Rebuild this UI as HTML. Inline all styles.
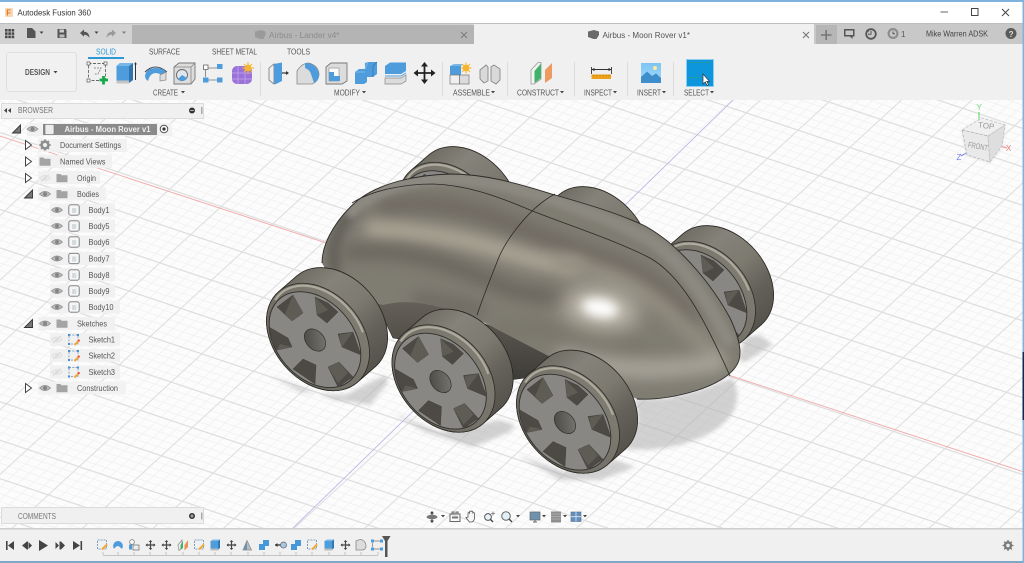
<!DOCTYPE html>
<html><head><meta charset="utf-8"><title>Autodesk Fusion 360</title>
<style>
html,body{margin:0;padding:0;background:#fff;width:1024px;height:563px;overflow:hidden}
svg{display:block;filter:blur(.3px)}
text{font-family:"Liberation Sans",sans-serif;fill:#555;font-size:8px}
</style></head><body>
<svg width="1024" height="563" viewBox="0 0 1024 563" xmlns="http://www.w3.org/2000/svg">
<defs>
<pattern id="grid" width="1" height="1" patternUnits="userSpaceOnUse" patternTransform="matrix(51.7 17.3 -30.7 28.2 893.3 430.7)">
<rect width="1" height="1" fill="#fcfcfc"/>
<g fill="#f1f1f1"><rect x=".2" width=".016" height="1"/><rect x=".4" width=".016" height="1"/><rect x=".6" width=".016" height="1"/><rect x=".8" width=".016" height="1"/><rect y=".2" width="1" height=".022"/><rect y=".4" width="1" height=".022"/><rect y=".6" width="1" height=".022"/><rect y=".8" width="1" height=".022"/></g>
<g fill="#dedede"><rect width=".022" height="1"/><rect width="1" height=".034"/></g>
</pattern>
<filter id="b2" x="-30%" y="-30%" width="160%" height="160%"><feGaussianBlur stdDeviation="2"/></filter>
<filter id="b3" x="-30%" y="-30%" width="160%" height="160%"><feGaussianBlur stdDeviation="3"/></filter>
<filter id="b6" filterUnits="userSpaceOnUse" x="280" y="130" width="500" height="310"><feGaussianBlur stdDeviation="7"/></filter>
<filter id="b5" filterUnits="userSpaceOnUse" x="280" y="130" width="500" height="310"><feGaussianBlur stdDeviation="5"/></filter>
<filter id="b12" filterUnits="userSpaceOnUse" x="280" y="130" width="500" height="310"><feGaussianBlur stdDeviation="11"/></filter>
<linearGradient id="tread" x1="0" y1="0" x2="0" y2="1"><stop offset="0" stop-color="#706d65"/><stop offset=".22" stop-color="#85827a"/><stop offset=".5" stop-color="#7d7a70"/><stop offset=".75" stop-color="#64615a"/><stop offset="1" stop-color="#56534d"/></linearGradient>
<linearGradient id="rim" x1="0" y1="0" x2="1" y2="0"><stop offset="0" stop-color="#6b6861"/><stop offset="1" stop-color="#7f7c72"/></linearGradient>
<linearGradient id="hub" x1="0" y1="0" x2="1" y2="1"><stop offset="0" stop-color="#47453f"/><stop offset="1" stop-color="#7b7a74"/></linearGradient>
<linearGradient id="under" x1="0" y1="0" x2="0" y2="1"><stop offset="0" stop-color="#66625a"/><stop offset="1" stop-color="#3e3c37"/></linearGradient>
<linearGradient id="sky" x1="0" y1="0" x2="0" y2="1"><stop offset="0" stop-color="#7cc4f5"/><stop offset="1" stop-color="#a7dbf9"/></linearGradient>
<clipPath id="bodyClip"><path d="M322,263 C322,240 340,215 358,200 C380,183 415,175 450,174 C490,174 525,186 555,195 C590,205 620,214 645,226 C680,245 712,285 730,318 C738,335 742,350 739,360 C735,373 718,384 695,391 C675,397 655,400 637,399 L560,362 L483,322 L442,308 Q410,298 383,305 L340,295 Z"/></clipPath>
<clipPath id="canvas"><rect x="0" y="100" width="1024" height="428"/></clipPath>

<g id="wheel">
 <g transform="rotate(-41)">
  <path d="M0,-60 L24,-60 A44,60 0 0 1 24,60 L0,60 A44,60 0 0 1 0,-60Z" fill="url(#tread)" stroke="#26251f" stroke-width=".8"/>
  <ellipse rx="44" ry="60" fill="url(#rim)" stroke="#2b2a25" stroke-width=".8"/>
  <path d="M-8,-56 A41,57 0 0 1 37,26" fill="none" stroke="#aeaa9d" stroke-width="2.2"/>
  <ellipse cx="-4" rx="38.5" ry="54" fill="#888783" stroke="#2f2e2a" stroke-width=".9"/>
 </g>
 <g transform="translate(-3,3)">
  <g fill="#4d4a45" stroke="#3a3833" stroke-width=".4">
   <polygon points="-38,-33 -22,-45 -12,-27 -23,-19"/>
   <polygon points="0,-43 13,-37 23,-28 12,-17 2,-25"/>
   <polygon points="23,-6 38,-8 46,15 27,7"/>
   <polygon points="13,27 24,22 38,37 23,47"/>
   <polygon points="-22,29 -12,19 1,25 0,44"/>
   <polygon points="-46,-13 -27,-2 -23,7 -38,10 -43,2"/>
  </g>
  <g fill="#5f5c55">
   <polygon points="0,-43 13,-30 2,-25"/>
   <polygon points="13,27 24,22 33,33 23,43"/>
   <polygon points="27,7 38,-8 24,-5"/>
   <polygon points="-23,7 -38,10 -35,4"/>
   <polygon points="-30,-26 -22,-45 -12,-27 -23,-19"/>
  </g>
  <g transform="rotate(-41)"><ellipse rx="9" ry="12.5" fill="url(#hub)" stroke="#33312d" stroke-width=".7"/></g>
 </g>
</g>

<g id="eye"><path d="M-5.5,0 Q0,-5 5.5,0 Q0,5 -5.5,0Z" fill="#bdbdbd" stroke="#8c8c8c" stroke-width=".8"/><circle r="2" fill="#858585"/></g>
<g id="eyeoff" opacity=".9"><path d="M-5.5,0 Q0,-5 5.5,0 Q0,5 -5.5,0Z" fill="#ececec" stroke="#dcdcdc" stroke-width=".8"/><circle r="1.8" fill="#dedede"/><path d="M-4,3.5 L4,-3.5" stroke="#d8d8d8"/></g>
<g id="folder"><path d="M-5.5,-4 h4 l1,1.2 h6 v7 h-11Z" fill="#a4a4a4"/></g>
<g id="bodyi"><rect x="-5.2" y="-5.2" width="10.4" height="10.4" rx="2" fill="#f6f6f6" stroke="#777" stroke-width=".9"/><rect x="-2" y="-2" width="4.2" height="5" fill="#d4dce2"/></g>
<g id="ski"><rect x="-4.5" y="-4.5" width="9" height="9" fill="none" stroke="#5b90bd" stroke-width=".7" stroke-dasharray="2 1.3"/><g fill="#4a90cf"><rect x="-5.5" y="-5.5" width="2" height="2"/><rect x="3.5" y="-5.5" width="2" height="2"/><rect x="-5.5" y="3.5" width="2" height="2"/></g><path d="M1,5.5 L5.5,1" stroke="#f2a73b" stroke-width="2"/><circle cx="5.3" cy="1" r="1.1" fill="#e8543f"/></g>
<path id="tro" d="M-3,-4.5 L3,0 L-3,4.5Z" fill="#fff" stroke="#444" stroke-width="1"/>
<path id="trd" d="M4,-4 L4,4 L-4,4Z" fill="#777" stroke="#333" stroke-width=".9"/>
<g id="car"><path d="M-2,-1 h4 l-2,2.4Z" fill="#444"/></g>

<g id="tsk"><rect x="-4.5" y="-4.5" width="9" height="9" fill="none" stroke="#5b90bd" stroke-width=".8" stroke-dasharray="2 1"/><path d="M0,5 L5,0" stroke="#f2a73b" stroke-width="2"/></g>
<g id="tmv"><path d="M-4.5,0 H4.5 M0,-4.5 V4.5" stroke="#444" stroke-width="1.2"/><path d="M-5,0 l2,-1.8 v3.6Z M5,0 l-2,-1.8 v3.6Z M0,-5 l-1.8,2 h3.6Z M0,5 l-1.8,-2 h3.6Z" fill="#444"/></g>
<g id="tex"><rect x="-4.5" y="-4" width="7.5" height="9" fill="#4f9ddb"/><path d="M-4.5,-4 L-2,-5.5 H5 L3,-4Z" fill="#7fb9e8"/><path d="M3,-4 L5,-5.5 V3 L3,5Z" fill="#2f78b5"/><rect x="-4.5" y="3.5" width="8" height="2" fill="#bbb"/></g>
<g id="tcb"><path d="M-5,-1 L-1,-1 V-5 H5 V1 H1 V5 H-5Z" fill="#4898d9"/></g>
</defs>

<!-- window chrome -->
<rect width="1024" height="563" fill="#fff"/>
<rect width="1024" height="2" fill="#7fb3de"/>
<rect x="5" y="8" width="8" height="9" rx="1" fill="#f7d9b8"/>
<text x="6.3" y="15.6" font-size="10" font-weight="bold" style="fill:#e8741c">F</text>
<text x="17.5" y="15.5" font-size="8.8" textLength="73.5" lengthAdjust="spacingAndGlyphs" style="fill:#333">Autodesk Fusion 360</text>
<path d="M940.5,12 H948" stroke="#666" stroke-width="1"/>
<rect x="971.5" y="8.5" width="6.5" height="7" fill="none" stroke="#444" stroke-width="1"/>
<path d="M1002,9 L1009,16 M1009,9 L1002,16" stroke="#444" stroke-width="1"/>

<!-- tab row -->
<rect y="23" width="1024" height="21" fill="#d2d2d2"/>
<rect y="23" width="1024" height="1" fill="#bdbdbd"/>
<rect x="132" y="25" width="342" height="19" fill="#b4b4b4"/>
<rect x="474" y="24" width="340" height="20" fill="#f0f0f0"/>
<rect x="814" y="24" width="210" height="20" fill="#c8c8c8"/>
<rect x="816" y="25" width="21" height="19" fill="#b6b6b6"/>

<g fill="#4a4a4a"><rect x="5" y="29" width="2.6" height="2.6"/><rect x="8.3" y="29" width="2.6" height="2.6"/><rect x="11.6" y="29" width="2.6" height="2.6"/><rect x="5" y="32.3" width="2.6" height="2.6"/><rect x="8.3" y="32.3" width="2.6" height="2.6"/><rect x="11.6" y="32.3" width="2.6" height="2.6"/><rect x="5" y="35.6" width="2.6" height="2.6"/><rect x="8.3" y="35.6" width="2.6" height="2.6"/><rect x="11.6" y="35.6" width="2.6" height="2.6"/></g>
<path d="M27,28 h5 l3.5,3.5 v6.5 h-8.5Z" fill="#555"/>
<use href="#car" x="41.5" y="32.5"/>
<path d="M57.5,29 h8 l1,1 v8 h-9Z" fill="#555"/><rect x="59.5" y="29.5" width="4.5" height="3" fill="#ccc"/><rect x="59.5" y="34.5" width="5" height="3" fill="#bbb"/>
<path d="M80,33 l4,-3.5 v2.2 q5,0 5.5,6 q-2,-3 -5.5,-3 v2Z" fill="#555"/>
<use href="#car" x="96.5" y="32.5"/>
<path d="M116,33 l-4,-3.5 v2.2 q-5,0 -5.5,6 q2,-3 5.5,-3 v2Z" fill="#9b9b9b"/>
<use href="#car" x="124" y="32.5" opacity=".6"/>

<path d="M255,31.5 l6,-1.5 l4.5,1.5 v3 l-2,4.5 h-3.5 l-5,-2Z" fill="#9a9a9a"/>
<text x="269" y="38" font-size="8.6" textLength="70.5" lengthAdjust="spacingAndGlyphs" style="fill:#8b8b8b">Airbus - Lander v4*</text>
<path d="M461,32 L467,38 M467,32 L461,38" stroke="#7d7d7d" stroke-width="1.1"/>
<path d="M588,31.5 l6,-1.5 l5,1.5 v3.5 l-2.5,4 h-3 l-5.500,-2Z" fill="#6a6a6a"/>
<text x="602.5" y="38" font-size="8.6" textLength="87.5" lengthAdjust="spacingAndGlyphs" style="fill:#555">Airbus - Moon Rover v1*</text>
<path d="M803,32 L809,38 M809,32 L803,38" stroke="#777" stroke-width="1.1"/>
<path d="M821,35 H831.5 M826.2,30 V40" stroke="#757575" stroke-width="1.6"/>
<path d="M844,29 h10.5 v7.5 h-2 v2.5 l-2.5,-2.5 h-6Z" fill="#555"/><rect x="845.5" y="30.5" width="7.5" height="4.5" fill="#c8c8c8"/>
<circle cx="871" cy="34" r="4.8" fill="none" stroke="#555" stroke-width="1.8"/><path d="M871,31 v3.3 h-3" stroke="#555" fill="none"/><path d="M866,30 l3,-.5 -.5,3Z" fill="#555"/>
<circle cx="893" cy="33.5" r="5.5" fill="#8d8d8d"/><circle cx="893" cy="33.5" r="3.3" fill="#c8c8c8"/><path d="M893,31.5 v2.2 h2" stroke="#555" fill="none"/>
<text x="901" y="37" font-size="8" style="fill:#555">1</text>
<text x="926" y="36.5" font-size="8" textLength="62" lengthAdjust="spacingAndGlyphs" style="fill:#444">Mike Warren ADSK</text>
<circle cx="1011" cy="33.5" r="5.5" fill="#5b5b5b"/><text x="1008.6" y="36.8" font-size="8.5" font-weight="bold" style="fill:#ddd">?</text>

<!-- canvas -->
<rect x="0" y="100" width="1024" height="428" fill="url(#grid)"/>
<g clip-path="url(#canvas)">
<path d="M0,136 L1024,472" stroke="#f2a9a9" stroke-width=".9"/>
<path d="M733,100 L293,528" stroke="#b9b9ea" stroke-width=".9"/>
<!-- ground shadows -->
<g fill="#b5b5b5" opacity=".6" filter="url(#b2)">
 <path d="M269,375 L300,392 L345,395 L385,375 L388,383 L370,405 L335,400 Z"/>
 <path d="M393,413 L440,432 L500,420 L515,425 L510,432 L473,447 L425,432Z"/>
 <path d="M518,455 L565,472 L615,460 L635,467 L600,480 L560,480Z"/>
 <path d="M745,337 L760,335 L773,345 L745,362 L738,360Z"/>
 <path d="M635,399 L667,398 L700,390 L732,378 C742,395 738,415 715,430 C690,445 660,452 625,449 L638,420Z"/>
</g>
<!-- back wheels -->
<use href="#wheel" x="704" y="295"/>
<use href="#wheel" x="450" y="216"/>
<use href="#wheel" x="580" y="256"/>
<!-- underbody -->
<path d="M375,300 Q410,295 442,308 L560,352 L570,372 L510,380 L440,345 L393,338Z" fill="url(#under)" stroke="#2d2b27" stroke-width=".6"/>
<!-- body -->
<g clip-path="url(#bodyClip)">
 <rect x="300" y="160" width="460" height="260" fill="#7f7c72"/>
 <g fill="none" stroke-linecap="round">
  <path d="M385,207 Q445,198 500,220 T610,262 T690,320" stroke="#6f6b62" stroke-width="18" filter="url(#b6)"/>
  <path d="M372,229 Q440,232 500,250 T575,266" stroke="#aea797" stroke-width="16" filter="url(#b6)"/>
  <path d="M560,262 Q625,272 672,315 T716,360" stroke="#938e81" stroke-width="15" filter="url(#b6)"/>
  <path d="M350,252 Q405,250 445,264 T505,287 T590,300" stroke="#6a665d" stroke-width="15" filter="url(#b6)"/>
  <path d="M420,300 Q455,306 476,310" stroke="#6f6c63" stroke-width="18" filter="url(#b6)"/>
  <path d="M500,330 Q580,326 640,345" stroke="#787469" stroke-width="12" filter="url(#b6)"/>
  <path d="M565,358 Q640,378 716,362" stroke="#a5a197" stroke-width="20" filter="url(#b6)"/>
  <path d="M335,270 Q328,235 356,207" stroke="#625f58" stroke-width="12" filter="url(#b5)"/>
  <path d="M352,212 C372,188 415,178 450,178 C490,180 525,190 555,200 C590,212 625,225 650,240 C680,260 705,295 728,340" stroke="#8c8981" stroke-width="13" filter="url(#b3)"/>
 </g>
 <ellipse cx="600" cy="308" rx="38" ry="20" transform="rotate(10 600 308)" fill="#c5bfb2" filter="url(#b12)"/>
 <ellipse cx="600" cy="308" rx="18" ry="9" transform="rotate(10 600 308)" fill="#fff" filter="url(#b5)"/>
</g>
<g fill="none" stroke="#2b2a26" stroke-width=".9">
 <path d="M322,263 C322,240 340,215 358,200 C380,183 415,175 450,174 C490,174 525,186 555,195 C590,205 620,214 645,226 C680,245 712,285 730,318 C738,335 742,350 739,360 C735,373 718,384 695,391 C675,397 655,400 637,399"/>
 <path d="M352,203 C372,190 405,184 433,184 C465,185 495,195 530,210 C570,226 615,240 650,258 C680,275 703,315 730,376" stroke-width=".8"/>
 <path d="M555,194 C530,207 505,240 497,262 C490,280 483,297 477,315" stroke-width=".8"/>
</g>
<!-- front wheels -->
<use href="#wheel" x="318" y="337"/>
<use href="#wheel" x="443.5" y="378.5"/>
<use href="#wheel" x="568" y="419.5"/>

<!-- view cube -->
<path d="M979,112 V122" stroke="#7fe08d" stroke-width="1.5"/>
<path d="M1000,146 L1007,148" stroke="#ef9a9a" stroke-width="1.2"/>
<path d="M968,152 L961,156" stroke="#7f8fe8" stroke-width="1.2"/>
<path d="M982,118 L1005,125 L1002,146 L990,162 L967,155 L962,130Z" fill="#e6e6e6" opacity=".95" filter="url(#b2)"/>
<path d="M962,130 L982,118 L1005,125 L988,136Z" fill="#f0f0f0" stroke="#c4c4c4" stroke-width=".8" stroke-dasharray="3 1.5"/>
<path d="M962,130 L988,136 L990,162 L967,155Z" fill="#e9e9e9" stroke="#b4b4b4" stroke-width=".8" stroke-dasharray="3 1.5"/>
<path d="M988,136 L1005,125 L1002,146 L990,162Z" fill="#dedede" stroke="#bebebe" stroke-width=".8" stroke-dasharray="3 1.5"/>
<text x="978" y="128" font-size="5" style="fill:#999" transform="rotate(8 983 126)">TOP</text>
<text x="968" y="149" font-size="6.2" textLength="20" lengthAdjust="spacingAndGlyphs" style="fill:#999" transform="rotate(10 978 146)">FRONT</text>
<text x="976.5" y="110" font-size="7.5" style="fill:#6fdc7e">Y</text>
<text x="1006" y="151" font-size="7.5" style="fill:#ea7a7a">X</text>
<text x="956.5" y="160" font-size="7.5" style="fill:#6e7ee0">Z</text>

<!-- nav bar -->
<g transform="translate(432,517)"><path d="M-5,0 H5 M0,-5 V5" stroke="#4e4e4e" stroke-width="1.2"/><ellipse rx="5.5" ry="2.2" fill="#777"/><path d="M0,-6 l-2,2.5 h4Z M0,6 l-2,-2.5 h4Z" fill="#333"/></g>
<use href="#car" x="443" y="516"/>
<g fill="none" stroke="#666" stroke-width="1"><rect x="450" y="514" width="10" height="7.5"/><path d="M452,514 v-2 h2 v2 M456,514 v-2 h2 v2"/></g><rect x="452" y="516.5" width="6" height="2" fill="#777"/>
<path d="M468,517 v-4 q1,-1 1.6,0 v-1.5 q1,-1 1.6,0 q.8,-1 1.6,0 v1.5 q1,-1 1.6,0 v6 q-1,3 -3,3 h-2 l-3.5,-4.5Z" fill="#f6f6f6" stroke="#555" stroke-width=".8"/>
<circle cx="488" cy="517" r="3.4" fill="#e8f1f6" stroke="#555" stroke-width="1"/><path d="M490.5,519.5 L493,522" stroke="#444" stroke-width="1.4"/><path d="M491,513.5 h4 M493,511.5 v4" stroke="#777" stroke-width=".8"/>
<circle cx="506" cy="516" r="4.3" fill="#e3eff6" stroke="#666" stroke-width="1"/><path d="M509,519 L512,522" stroke="#444" stroke-width="1.4"/>
<use href="#car" x="518" y="516"/>
<rect x="530" y="512" width="10" height="8" fill="#6f93ae" stroke="#666" stroke-width=".7"/><path d="M533,522 h4 M535,520 v2" stroke="#666"/>
<use href="#car" x="544" y="516"/>
<rect x="551" y="511.5" width="10" height="11" fill="#8e8e8e"/><path d="M551,514 h10 M551,516.5 h10 M551,519 h10" stroke="#c8c8c8" stroke-width=".6"/>
<use href="#car" x="565" y="516"/>
<rect x="571" y="512" width="10" height="9.5" fill="#5f90c1" stroke="#5a6f82" stroke-width=".6"/><path d="M576,512 v9.5 M571,516.7 h10" stroke="#e7e7e7" stroke-width=".8"/>
<use href="#car" x="585" y="516"/>
</g>

<!-- ribbon -->
<rect y="44" width="1024" height="56" fill="#f0f0f0"/>
<rect x="6.5" y="52.5" width="70" height="39" rx="2.5" fill="#f1f1f1" stroke="#dfdfdf"/>
<text x="25" y="75" font-size="7.4" font-weight="bold" textLength="25" lengthAdjust="spacingAndGlyphs" style="fill:#555">DESIGN</text>
<use href="#car" x="55.5" y="72"/>
<text x="96" y="54.5" font-size="7.4" textLength="20" lengthAdjust="spacingAndGlyphs" style="fill:#2c98d8">SOLID</text>
<rect x="88" y="57" width="36" height="2" fill="#2c98d8"/>
<text x="149" y="54.5" font-size="7.4" textLength="31" lengthAdjust="spacingAndGlyphs">SURFACE</text>
<text x="212" y="54.5" font-size="7.4" textLength="45" lengthAdjust="spacingAndGlyphs">SHEET METAL</text>
<text x="287" y="54.5" font-size="7.4" textLength="23" lengthAdjust="spacingAndGlyphs">TOOLS</text>

<g fill="none" stroke="#dcdcdc" stroke-width="1"><path d="M260.5,62 V96 M442.5,62 V96 M507.5,62 V96 M574.5,62 V96 M627.5,62 V96 M673.5,62 V96"/></g>

<text x="153" y="95.5" font-size="7.4" textLength="25" lengthAdjust="spacingAndGlyphs">CREATE</text><use href="#car" x="183" y="92"/>
<text x="334" y="95.5" font-size="7.4" textLength="26" lengthAdjust="spacingAndGlyphs">MODIFY</text><use href="#car" x="364" y="92"/>
<text x="453" y="95.5" font-size="7.4" textLength="37" lengthAdjust="spacingAndGlyphs">ASSEMBLE</text><use href="#car" x="493" y="92"/>
<text x="517" y="95.5" font-size="7.4" textLength="42" lengthAdjust="spacingAndGlyphs">CONSTRUCT</text><use href="#car" x="562" y="92"/>
<text x="584" y="95.5" font-size="7.4" textLength="28" lengthAdjust="spacingAndGlyphs">INSPECT</text><use href="#car" x="615" y="92"/>
<text x="637" y="95.5" font-size="7.4" textLength="24" lengthAdjust="spacingAndGlyphs">INSERT</text><use href="#car" x="664" y="92"/>
<text x="684" y="95.5" font-size="7.4" textLength="25" lengthAdjust="spacingAndGlyphs">SELECT</text><use href="#car" x="712" y="92"/>

<!-- create sketch -->
<rect x="88.5" y="63.5" width="17" height="17" fill="none" stroke="#666" stroke-width=".9" stroke-dasharray="3 1.5"/>
<g fill="#fff" stroke="#555" stroke-width=".7"><rect x="87" y="62" width="3" height="3"/><rect x="104" y="62" width="3" height="3"/><rect x="87" y="79" width="3" height="3"/></g>
<path d="M94,68 h7 l-3,6 h-4" fill="none" stroke="#777" stroke-width=".8" stroke-dasharray="2 1"/>
<path d="M103.5,76 V84.5 M99.5,80 H108" stroke="#17a84a" stroke-width="2.8"/>
<!-- extrude -->
<path d="M116.5,66 L120,63 H133 V80 L129,83 H116.5Z" fill="#4e9cdc"/><path d="M129,66 L133,63 V80 L129,83Z" fill="#2f74ae"/><path d="M116.5,66 L120,63 H133 L129,66Z" fill="#79b6e8"/><rect x="116.5" y="80.5" width="12.5" height="3" fill="#c5c5c5"/>
<path d="M135.5,63 V80" stroke="#333" stroke-width="1"/><path d="M135.5,62 l-1.4,2.4 h2.8Z" fill="#333"/>
<!-- revolve -->
<path d="M145,72 Q155,62 167,72" fill="none" stroke="#444" stroke-width=".9"/>
<path d="M145,76 Q146,68 156,68 Q165,68 166,73 L165,78 Q163,74 156,73 Q150,73 148,81 Q145,79 145,76Z" fill="#4e9cdc"/>
<path d="M160,75 L166,72 V80 L160,81Z" fill="#ddd" stroke="#888" stroke-width=".7"/>
<!-- hole -->
<path d="M174,67 L179,63 H195 V79 L191,84 H174Z" fill="#dcdcdc" stroke="#777" stroke-width=".9"/><path d="M174,67 H191 V84 M191,67 L195,63" fill="none" stroke="#888" stroke-width=".8"/>
<circle cx="182" cy="75" r="5.5" fill="#dfe6ec" stroke="#666" stroke-width=".9"/><path d="M182,75 L187,78 A5.5,5.5 0 0 1 178,79Z" fill="#4e9cdc"/>
<!-- pattern -->
<path d="M208,68 H217 M208,80 H217 M205.5,70 V77" stroke="#777" stroke-width=".8"/>
<rect x="203.5" y="65" width="4.5" height="4.5" fill="#fff" stroke="#666" stroke-width=".8"/>
<g fill="#4e9cdc"><rect x="217" y="64" width="5.5" height="5"/><rect x="203" y="77.5" width="5.5" height="5"/><rect x="217" y="77.5" width="5.5" height="5"/></g>
<!-- form -->
<rect x="232" y="66" width="20" height="18" rx="5" fill="#9a72d8"/><path d="M238,66 V84 M245,66 V84 M232,73 H252 M232,79 H252" stroke="#c2a6ec" stroke-width=".8"/>
<circle cx="248" cy="68" r="3.4" fill="#f5b62c"/><path d="M248,62 V74 M242,68 H254 M244,64 L252,72 M252,64 L244,72" stroke="#f5b62c" stroke-width="1"/>

<!-- press pull -->
<path d="M269,68 L274,64 V84 L269,80Z" fill="#eee" stroke="#777" stroke-width=".8"/><path d="M274,64 L282,62.5 V81 L276,84 H274Z" fill="#4e9cdc"/><path d="M282,73 H288" stroke="#333" stroke-width="1.2"/><path d="M289,73 l-3,-2 v4Z" fill="#333"/>
<!-- fillet -->
<path d="M297,84 V71 Q302,63 309,63 Q319,66 319,75 Q318,82 312,84Z" fill="#dcdcdc" stroke="#888" stroke-width=".8"/>
<path d="M305,63 Q317,63 319,75 Q319,80 314,83 L311,74 Q310,70 305,68Z" fill="#4e9cdc"/>
<!-- shell -->
<path d="M326,67 L331,63 H347 V81 L342,84 H326Z" fill="#dcdcdc" stroke="#777" stroke-width=".9"/><rect x="329" y="68" width="10" height="13" fill="#fafafa" stroke="#888" stroke-width=".6"/><path d="M329,72 H334 V76 H340 V81 H329Z" fill="#4e9cdc"/>
<!-- combine -->
<path d="M355,72 L359,69 H365 V63 L368,62 H377 V74 L373,77 H367 V82 L364,84 H355Z" fill="#4e9cdc"/><path d="M365,69 L368,62" stroke="#7fb9e8"/><path d="M355,72 H365" stroke="#7fb9e8"/><path d="M373,77 V66 M373,66 L377,62" stroke="#2f74ae" stroke-width=".8"/>
<!-- split -->
<path d="M385,66 L390,62.5 H406 V71 L401,74 H385Z" fill="#4e9cdc"/>
<path d="M385,76 H401 L406,73" fill="none" stroke="#4e9cdc" stroke-width="1"/>
<path d="M385,78 H401 L406,75 V81 L401,84 H385Z" fill="#dcdcdc" stroke="#888" stroke-width=".7"/>
<!-- move -->
<g stroke="#222" stroke-width="1.8"><path d="M415,73 H434 M424.5,63 V83"/></g><path d="M413.5,73 l4.5,-3.5 v7Z M435.5,73 l-4.5,-3.5 v7Z M424.5,62 l-3.5,4.5 h7Z M424.5,84 l-3.5,-4.5 h7Z" fill="#222"/>

<!-- assemble -->
<rect x="450" y="66" width="11" height="9" fill="#4e9cdc"/><path d="M450,66 L454,64 H463 L461,66Z" fill="#79b6e8"/><rect x="450" y="75" width="9.5" height="9" fill="#efefef" stroke="#777" stroke-width=".7"/><rect x="459.5" y="75" width="9.5" height="9" fill="#dcdcdc" stroke="#777" stroke-width=".7"/>
<circle cx="466" cy="68" r="3.4" fill="#f5b62c"/><path d="M466,62.5 V73.5 M460.5,68 H471.5 M462,64 L470,72 M470,64 L462,72" stroke="#f5b62c" stroke-width="1"/>
<path d="M480,70 L486,65 L488,67 V81 L484,83 L480,79Z" fill="#d9d9d9" stroke="#888" stroke-width=".9"/>
<path d="M500,69 L494,65 L491,67 V81 L496,84 L500,80Z" fill="#d9d9d9" stroke="#888" stroke-width=".9"/>

<!-- construct -->
<path d="M531,70 L538,62.5 L541,62.5 V79 L534,84 H531Z" fill="#f3f3f3" stroke="#999" stroke-width=".8"/>
<path d="M534.5,71 L541,63.5 V78 L534.5,83Z" fill="#3fb36a"/>
<path d="M545,70 L552,63 V78 L545,83Z" fill="#ed9a61"/>

<!-- inspect -->
<path d="M592,69.5 H611" stroke="#333" stroke-width=".9"/><path d="M591.5,67 V74 M611.5,67 V74" stroke="#333" stroke-width=".9"/>
<path d="M591.5,69.5 l3,-1.6 v3.2Z M611.5,69.5 l-3,-1.6 v3.2Z" fill="#333"/>
<rect x="591.5" y="74.5" width="19.5" height="4.5" fill="#eea21b"/><path d="M594,74.5 v2 M597,74.5 v2 M600,74.5 v2 M603,74.5 v2 M606,74.5 v2 M609,74.5 v2" stroke="#a86b00" stroke-width=".5"/>

<!-- insert -->
<rect x="641" y="63" width="20" height="20" fill="url(#sky)"/><circle cx="655" cy="68" r="2" fill="#ffe89c"/>
<path d="M641,77 L647,71.5 L652,76 L656,73.5 L661,78 V83 H641Z" fill="#3d8ecb"/>

<!-- select -->
<rect x="686.5" y="59.5" width="27" height="27" fill="#0e96dd" stroke="#8fcbee" stroke-width="1"/>
<path d="M689,62.5 H711 M689,77.5 H702" stroke="#3aa36b" stroke-width=".7" stroke-dasharray="2 1.2"/>
<path d="M703,74 V84 L705.3,82 L707,85.5 L708.5,84.7 L706.8,81.4 H709.5Z" fill="#fff" stroke="#333" stroke-width=".7"/>

<!-- browser panel -->
<rect x="1.5" y="103.5" width="202" height="15" fill="#f0f0f0" stroke="#dcdcdc"/>
<path d="M7,108 l-3,2.5 3,2.5Z M11,108 l-3,2.5 3,2.5Z" fill="#444"/>
<text x="18" y="113.2" font-size="7.4" textLength="35" lengthAdjust="spacingAndGlyphs" style="fill:#777">BROWSER</text>
<circle cx="192" cy="110.5" r="3" fill="#333"/><path d="M190.3,110.5 h3.4" stroke="#ddd" stroke-width=".8"/><rect x="201" y="107" width="1.5" height="7" fill="#aaa"/>

<g fill="#f1f1f1" opacity=".92">
<rect x="38" y="139" width="89" height="13"/><rect x="38" y="155" width="74" height="13"/><rect x="38" y="171" width="62" height="13"/><rect x="38" y="187.5" width="68" height="13"/>
<rect x="50" y="203.5" width="65" height="13"/><rect x="50" y="219.5" width="65" height="13"/><rect x="50" y="235.5" width="65" height="13"/><rect x="50" y="252" width="65" height="13"/><rect x="50" y="268" width="65" height="13"/><rect x="50" y="284.5" width="65" height="13"/><rect x="50" y="300.5" width="70" height="13"/>
<rect x="38" y="317" width="77" height="13"/><rect x="50" y="333" width="70" height="13"/><rect x="50" y="349" width="70" height="13"/><rect x="50" y="365.5" width="70" height="13"/><rect x="38" y="381.5" width="88" height="13"/>
<rect x="27" y="123" width="145" height="13"/>
</g>

<use href="#trd" x="16.5" y="129"/>
<use href="#eye" x="32.5" y="129"/>
<rect x="43" y="124" width="114" height="11" fill="#8a8a8a"/><rect x="45" y="124.5" width="9" height="10" rx="1" fill="#ececec" stroke="#777" stroke-width=".6"/>
<text x="64.5" y="132" font-size="7.6" font-weight="bold" textLength="86" lengthAdjust="spacingAndGlyphs" style="fill:#f0f0f0">Airbus - Moon Rover v1</text>
<circle cx="164" cy="129" r="3.8" fill="#fafafa" stroke="#444" stroke-width=".9"/><circle cx="164" cy="129" r="1.6" fill="#333"/>

<use href="#tro" x="28.5" y="145"/>
<g transform="translate(45,145)"><circle r="3.6" fill="none" stroke="#8c8c8c" stroke-width="2.2"/><path d="M0,-5.8 V5.8 M-5.8,0 H5.8 M-4,-4 L4,4 M4,-4 L-4,4" stroke="#8c8c8c" stroke-width="1.4"/><circle r="2" fill="#f1f1f1"/></g>
<text x="60" y="148" font-size="7.6" textLength="61" lengthAdjust="spacingAndGlyphs">Document Settings</text>

<use href="#tro" x="28.5" y="161.5"/><use href="#folder" x="45" y="161.5"/>
<text x="60" y="164.5" font-size="7.6" textLength="45.5" lengthAdjust="spacingAndGlyphs">Named Views</text>

<use href="#tro" x="28.5" y="178"/><use href="#eyeoff" x="45" y="178"/><use href="#folder" x="62" y="178"/>
<text x="77" y="181" font-size="7.6" textLength="19" lengthAdjust="spacingAndGlyphs">Origin</text>

<use href="#trd" x="28.5" y="194"/><use href="#eye" x="45" y="194"/><use href="#folder" x="62" y="194"/>
<text x="77" y="197" font-size="7.6" textLength="22" lengthAdjust="spacingAndGlyphs">Bodies</text>

<use href="#eye" x="57" y="210"/><use href="#bodyi" x="74" y="210"/><text x="88.5" y="213" font-size="7.6" textLength="21" lengthAdjust="spacingAndGlyphs">Body1</text>
<use href="#eye" x="57" y="226"/><use href="#bodyi" x="74" y="226"/><text x="88.5" y="229" font-size="7.6" textLength="21" lengthAdjust="spacingAndGlyphs">Body5</text>
<use href="#eye" x="57" y="242"/><use href="#bodyi" x="74" y="242"/><text x="88.5" y="245" font-size="7.6" textLength="21" lengthAdjust="spacingAndGlyphs">Body6</text>
<use href="#eye" x="57" y="258.5"/><use href="#bodyi" x="74" y="258.5"/><text x="88.5" y="261.5" font-size="7.6" textLength="21" lengthAdjust="spacingAndGlyphs">Body7</text>
<use href="#eye" x="57" y="275"/><use href="#bodyi" x="74" y="275"/><text x="88.5" y="278" font-size="7.6" textLength="21" lengthAdjust="spacingAndGlyphs">Body8</text>
<use href="#eye" x="57" y="291"/><use href="#bodyi" x="74" y="291"/><text x="88.5" y="294" font-size="7.6" textLength="21" lengthAdjust="spacingAndGlyphs">Body9</text>
<use href="#eye" x="57" y="307"/><use href="#bodyi" x="74" y="307"/><text x="88.5" y="310" font-size="7.6" textLength="25" lengthAdjust="spacingAndGlyphs">Body10</text>

<use href="#trd" x="28.5" y="323.5"/><use href="#eye" x="45" y="323.5"/><use href="#folder" x="62" y="323.5"/>
<text x="77" y="326.5" font-size="7.6" textLength="30" lengthAdjust="spacingAndGlyphs">Sketches</text>

<use href="#eyeoff" x="57" y="339.5"/><use href="#ski" x="73.5" y="339.5"/><text x="88.5" y="342.5" font-size="7.6" textLength="26.5" lengthAdjust="spacingAndGlyphs">Sketch1</text>
<use href="#eyeoff" x="57" y="355.5"/><use href="#ski" x="73.5" y="355.5"/><text x="88.5" y="358.5" font-size="7.6" textLength="26.5" lengthAdjust="spacingAndGlyphs">Sketch2</text>
<use href="#eyeoff" x="57" y="372"/><use href="#ski" x="73.5" y="372"/><text x="88.5" y="375" font-size="7.6" textLength="26.5" lengthAdjust="spacingAndGlyphs">Sketch3</text>

<use href="#tro" x="28.5" y="388"/><use href="#eye" x="45" y="388"/><use href="#folder" x="62" y="388"/>
<text x="77" y="391" font-size="7.6" textLength="41" lengthAdjust="spacingAndGlyphs">Construction</text>

<!-- comments -->
<rect x="1.5" y="507.5" width="202" height="16" fill="#f0f0f0" stroke="#dcdcdc"/>
<text x="18" y="519" font-size="7.4" textLength="38" lengthAdjust="spacingAndGlyphs" style="fill:#777">COMMENTS</text>
<circle cx="192" cy="516" r="3" fill="#333"/><path d="M190.3,516 h3.4 M192,514.3 v3.4" stroke="#ddd" stroke-width=".8"/><rect x="201" y="512.5" width="1.5" height="7" fill="#aaa"/>

<!-- timeline -->
<rect y="528" width="1024" height="33" fill="#f0f0f0"/>
<rect y="528" width="1024" height="1.5" fill="#cdcdcd"/>
<rect y="561" width="1024" height="2" fill="#7ea7c6"/>
<g fill="#444">
 <rect x="6" y="541" width="1.6" height="9"/><path d="M14,541 V550 L8,545.5Z"/>
 <path d="M22,545.5 L27,541.5 V549.5Z"/><path d="M26.5,541.5 h1.5 v8 h-1.5Z"/><path d="M28.5,542 L32,545.5 L28.5,549Z"/>
 <path d="M39,540 L48,545.5 L39,551Z"/>
 <path d="M55.5,542 L59,545.5 L55.5,549Z"/><path d="M59.5,541.5 h1.5 v8 h-1.5Z"/><path d="M61,541.5 L65,545.5 L61,549.5Z"/>
 <path d="M73,541 L80,545.5 L73,550Z"/><rect x="80.5" y="541" width="1.6" height="9"/>
</g>
<path d="M103,555.5 H378" stroke="#c4c4c4"/>
<path d="M103,552 V555 M118,552 V555 M134,552 V555 M150,552 V555 M166,552 V555 M183,552 V555 M199,552 V555 M215,552 V555 M231,552 V555 M248,552 V555 M264,552 V555 M280,552 V555 M296,552 V555 M312,552 V555 M329,552 V555 M345,552 V555 M361,552 V555 M378,552 V555" stroke="#c4c4c4"/>
<use href="#tsk" x="102" y="544.5"/>
<g transform="translate(118,545)"><path d="M-5,1 Q-4,-4 0,-4 Q4,-4 5,1 L4,4 Q1,1 0,1 Q-2,1 -4,4Z" fill="#4e9cdc"/></g>
<g transform="translate(134,545)"><circle cx="-2" cy="-3" r="2.4" fill="#f4f4f4" stroke="#777" stroke-width=".7"/><rect x="-1" y="0" width="6" height="5" fill="#eee" stroke="#666" stroke-width=".7"/><rect x="-5" y="-.5" width="3" height="5" fill="#4e9cdc"/></g>
<use href="#tmv" x="150.5" y="545"/><use href="#tmv" x="166.5" y="545"/>
<g transform="translate(183,545)"><path d="M-5,0 L-1,-5 V3 L-4,5.5Z" fill="#f1f1f1" stroke="#888" stroke-width=".7"/><path d="M-2.5,0 L0,-4 V3 L-2.5,5Z" fill="#3fb36a"/><path d="M1.5,0 L5,-5 V2 L1.5,5.5Z" fill="#ed8f55"/></g>
<use href="#tsk" x="199" y="544.5"/><use href="#tex" x="215" y="545"/><use href="#tmv" x="231.5" y="545"/>
<path d="M247,540.5 L251.5,550 H243Z" fill="#bdbdbd" stroke="#888" stroke-width=".7"/><path d="M247,540.5 L247,550 H243Z" fill="#6f92ae"/>
<use href="#tcb" x="264" y="545"/>
<g transform="translate(281,545)"><path d="M-6,0 H0" stroke="#333" stroke-width="1.3"/><path d="M-6,0 l2.5,-2 v4Z" fill="#333"/><circle cx="2.5" r="3" fill="#a8c8e2" stroke="#667" stroke-width=".8"/></g>
<use href="#tcb" x="296" y="545"/><use href="#tsk" x="312" y="544.5"/><use href="#tex" x="329" y="545"/><use href="#tmv" x="345.5" y="545"/>
<path d="M356,550 V541 Q359,539.5 361,539.5 Q366,541 366,546 Q366,549 363,550Z" fill="#dcdcdc" stroke="#888" stroke-width=".8"/>
<g transform="translate(377,545)"><path d="M-3,-4 H3 M-3,4 H3 M-4.5,-2 V2" stroke="#777" stroke-width=".7"/><g fill="#4e9cdc"><rect x="-6" y="-5.5" width="3" height="3"/><rect x="3" y="-5.5" width="3" height="3"/><rect x="-6" y="2.5" width="3" height="3"/><rect x="3" y="2.5" width="3" height="3"/></g></g>
<path d="M382,536 H390.5 L387.5,541 V557 H385 V541Z" fill="#555"/>
<g transform="translate(1008,545.5)"><circle r="3.2" fill="none" stroke="#7a7a7a" stroke-width="2"/><path d="M0,-5.5 V5.5 M-5.5,0 H5.5 M-3.9,-3.9 L3.9,3.9 M3.9,-3.9 L-3.9,3.9" stroke="#7a7a7a" stroke-width="1.3"/><circle r="1.7" fill="#f0f0f0"/></g>

<!-- window edge -->
<rect x="1022.5" y="0" width="1.5" height="563" fill="#7fb3de"/>
<rect x="1022.5" y="352" width="1.5" height="68" fill="#0d2a57"/>
</svg>
</body></html>
